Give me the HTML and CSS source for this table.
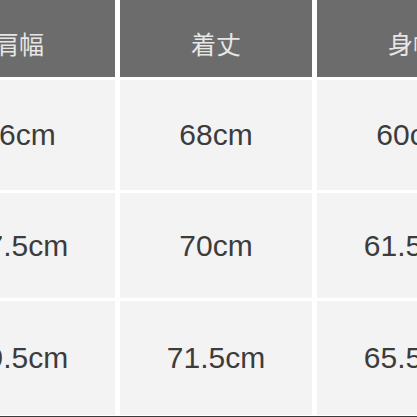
FILE: index.html
```html
<!DOCTYPE html>
<html lang="ja">
<head>
<meta charset="utf-8">
<link rel="stylesheet" href="styles.css">
</head>
<body>
<div class="viewport">
  <div class="size-table">
    <div class="cell head">肩幅</div>
    <div class="cell head">着丈</div>
    <div class="cell head">身幅</div>
    <div class="cell">36cm</div>
    <div class="cell">68cm</div>
    <div class="cell">60cm</div>
    <div class="cell">37.5cm</div>
    <div class="cell">70cm</div>
    <div class="cell">61.5cm</div>
    <div class="cell">39.5cm</div>
    <div class="cell">71.5cm</div>
    <div class="cell">65.5cm</div>
  </div>
  <div class="bottom-line"></div>
</div>
</body>
</html>
```
FILE: styles.css
```css
html, body {
  margin: 0;
  padding: 0;
  background: #ffffff;
}
.viewport {
  width: 417px;
  height: 417px;
  overflow: hidden;
  display: flex;
  flex-direction: column;
  background: #ffffff;
}
.size-table {
  margin-left: -77px;
  width: 586px;
  display: grid;
  grid-template-columns: 192px 192px 192px;
  grid-template-rows: 77px 110px 105px 114px;
  column-gap: 5px;
  row-gap: 3px;
  background: #ffffff;
  flex: none;
}
.cell {
  background: #f3f3f3;
  display: flex;
  align-items: center;
  justify-content: center;
  font-family: "Liberation Sans", Arial, "Noto Sans CJK JP", sans-serif;
  font-size: 30px;
  color: #3c3c3c;
}
.cell.head {
  background: #6c6c6c;
  color: #e6e6e6;
  font-family: "Noto Sans CJK JP", sans-serif;
  font-size: 25px;
  padding-top: 8px;
  box-sizing: border-box;
}
.bottom-line {
  margin-top: 1px;
  height: 2px;
  background: #3c3c3c;
  flex: none;
}
```
